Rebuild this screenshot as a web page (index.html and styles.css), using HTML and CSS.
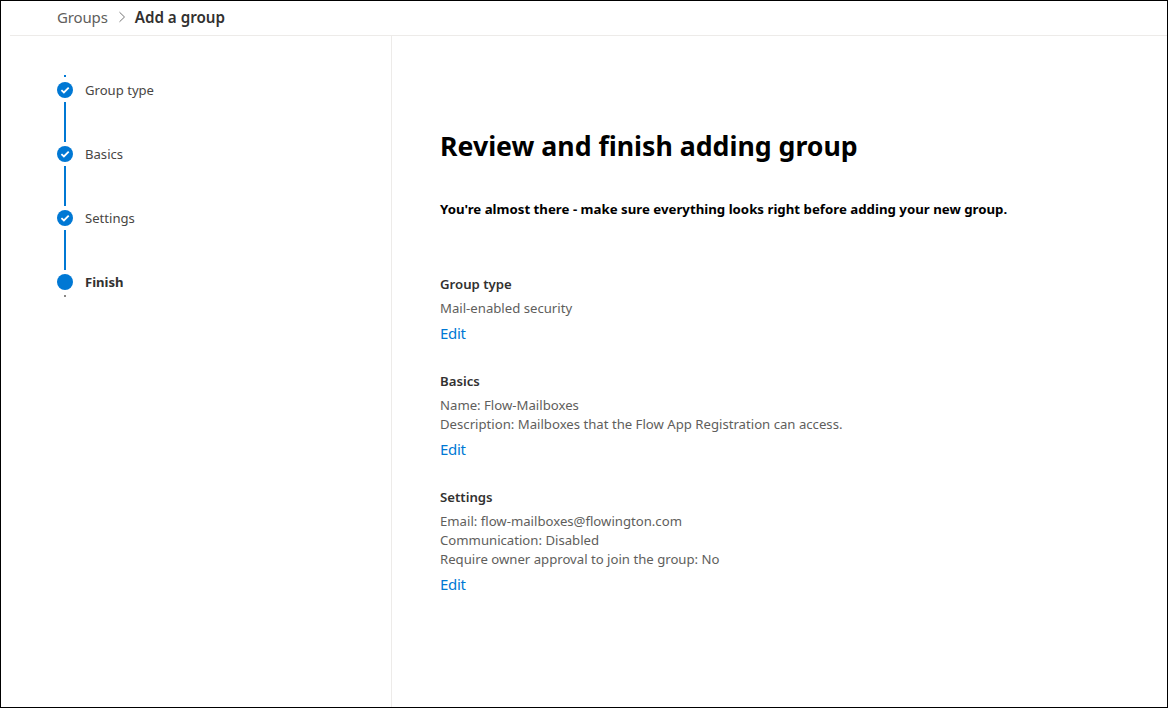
FILE: index.html
```html
<!DOCTYPE html>
<html lang="en">
<head>
<meta charset="utf-8">
<title>Add a group</title>
<link rel="stylesheet" href="styles.css">
</head>
<body>
<div class="frame">
  <header class="topbar">
    <span class="crumb">Groups</span>
    <svg class="chev" width="10" height="12" viewBox="0 0 10 12"><path d="M2.5 1.2 7.5 6 2.5 10.8" fill="none" stroke="#757575" stroke-width="1"/></svg>
    <span class="crumb-current">Add a group</span>
  </header>
  <div class="content">
    <nav class="steps">
      <div class="dot"></div>
      <div class="step">
        <span class="bullet"><svg width="16" height="16" viewBox="0 0 16 16"><path d="M4.4 8.2 6.9 10.5 11.7 5.7" fill="none" stroke="#fff" stroke-width="1.8"/></svg></span>
        <span class="step-label">Group type</span>
      </div>
      <div class="line"></div>
      <div class="step">
        <span class="bullet"><svg width="16" height="16" viewBox="0 0 16 16"><path d="M4.4 8.2 6.9 10.5 11.7 5.7" fill="none" stroke="#fff" stroke-width="1.8"/></svg></span>
        <span class="step-label">Basics</span>
      </div>
      <div class="line"></div>
      <div class="step">
        <span class="bullet"><svg width="16" height="16" viewBox="0 0 16 16"><path d="M4.4 8.2 6.9 10.5 11.7 5.7" fill="none" stroke="#fff" stroke-width="1.8"/></svg></span>
        <span class="step-label">Settings</span>
      </div>
      <div class="line"></div>
      <div class="step">
        <span class="bullet"></span>
        <span class="step-label current">Finish</span>
      </div>
      <div class="dot end"></div>
    </nav>
    <main class="review">
      <h1 class="title">Review and finish adding group</h1>
      <p class="lead">You're almost there - make sure everything looks right before adding your new group.</p>
      <section class="block">
        <h2 class="block-title">Group type</h2>
        <div class="row">Mail-enabled security</div>
        <a class="edit" href="#">Edit</a>
      </section>
      <section class="block">
        <h2 class="block-title">Basics</h2>
        <div class="row">Name: Flow-Mailboxes</div>
        <div class="row">Description: Mailboxes that the Flow App Registration can access.</div>
        <a class="edit" href="#">Edit</a>
      </section>
      <section class="block">
        <h2 class="block-title">Settings</h2>
        <div class="row">Email: flow-mailboxes@flowington.com</div>
        <div class="row">Communication: Disabled</div>
        <div class="row">Require owner approval to join the group: No</div>
        <a class="edit" href="#">Edit</a>
      </section>
    </main>
  </div>
</div>
</body>
</html>
```
FILE: styles.css
```css
* { box-sizing: border-box; }
html, body { margin: 0; height: 100%; }
body { font-family: "Noto Sans", "Open Sans", sans-serif; background: #fff; color: #323130; overflow: hidden; }
.frame { height: 708px; border: 1px solid #000; display: flex; flex-direction: column; }
.topbar { height: 35px; margin-left: 9px; padding: 0 0 2px 47px; border-bottom: 1px solid #edebe9; display: flex; align-items: center; flex: none; }
.crumb { font-size: 15px; letter-spacing: -0.01em; color: #605e5c; }
.chev { margin: 0 8px 0 9px; }
.crumb-current { font-size: 15.2px; font-weight: 600; color: #323130; }
.content { flex: 1; display: flex; min-height: 0; }
.steps { width: 391px; padding: 39px 0 0 56px; border-right: 1px solid #edebe9; flex: none; }
.dot { width: 2px; height: 2px; background: #0078d4; margin: 0 0 4px 7px; }
.dot.end { background: #8a8886; margin: 4px 0 0 7px; }
.step { display: flex; align-items: center; height: 18px; }
.bullet { width: 16px; height: 16px; border-radius: 50%; background: #0078d4; display: flex; align-items: center; justify-content: center; flex: none; }
.step-label { margin-left: 12px; font-size: 13.1px; color: #484644; }
.step-label.current { font-weight: 700; color: #323130; }
.line { width: 2px; height: 40px; background: #0078d4; margin: 3px 0 3px 7px; }
.review { flex: 1; padding: 92px 0 0 48px; }
.title { margin: 0; font-size: 26.7px; line-height: 36px; font-weight: 700; color: #000; }
.lead { margin: 35px 0 0; font-size: 13.25px; line-height: 20px; font-weight: 700; color: #000; }
.block { padding-bottom: 27px; }
.lead + .block { margin-top: 55px; }
.block-title { margin: 0 0 5px; font-size: 13.2px; line-height: 20px; font-weight: 600; color: #323130; }
.row { font-size: 13.16px; line-height: 19px; color: #605e5c; }
.edit { display: block; margin-top: 4px; font-size: 15px; letter-spacing: -0.02em; line-height: 22px; color: #0078d4; text-decoration: none; }
```
